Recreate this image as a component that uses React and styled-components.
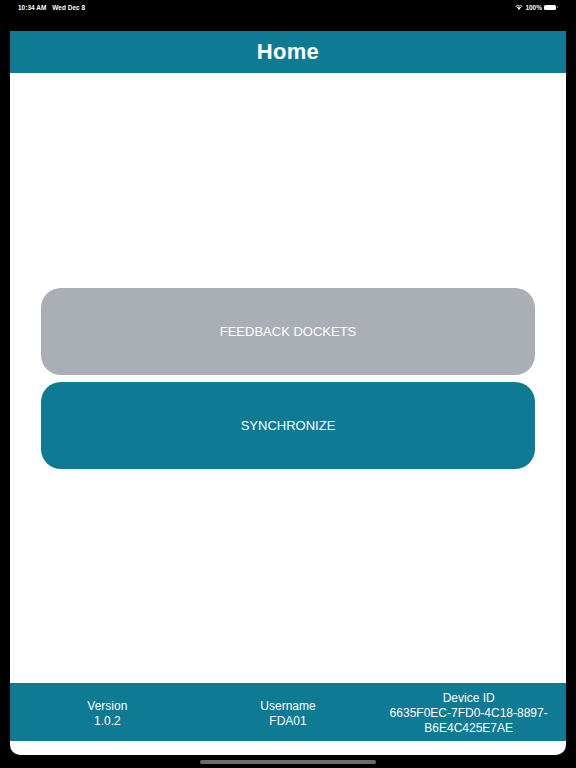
import styled, { createGlobalStyle } from "styled-components";

const GlobalStyle = createGlobalStyle`
  html, body {
    margin: 0;
    padding: 0;
    background: #000;
  }
  body {
    font-family: "Liberation Sans", Arial, Helvetica, sans-serif;
  }
`;

const TEAL = "#0e7a94";

const Screen = styled.div`
  width: 576px;
  height: 768px;
  display: flex;
  flex-direction: column;
  background: #000;
  overflow: hidden;
`;

const StatusBar = styled.div`
  height: 31px;
  flex-shrink: 0;
  display: flex;
  justify-content: space-between;
  align-items: flex-start;
  padding: 3px 18px 0 18px;
  box-sizing: border-box;
  color: #fff;
  font-size: 6.5px;
  font-weight: 700;
`;

const StatusGroup = styled.div`
  display: flex;
  align-items: center;
  gap: ${(p) => p.gap || 6}px;
  height: 8px;
`;

const Battery = styled.div`
  display: flex;
  align-items: center;
  gap: 1px;
`;

const BatteryBody = styled.div`
  width: 12px;
  height: 5px;
  border-radius: 1.5px;
  background: #fff;
`;

const BatteryNub = styled.div`
  width: 1px;
  height: 2px;
  border-radius: 0 1px 1px 0;
  background: #8a8a8a;
`;

const Sheet = styled.div`
  margin: 0 10px;
  height: 724px;
  flex-shrink: 0;
  background: #fff;
  border-radius: 0 0 10px 10px;
  display: flex;
  flex-direction: column;
  overflow: hidden;
`;

const Header = styled.header`
  height: 42px;
  flex-shrink: 0;
  background: ${TEAL};
  display: flex;
  align-items: center;
  justify-content: center;
`;

const Title = styled.h1`
  margin: 0;
  color: #fff;
  font-size: 22px;
  font-weight: 700;
  letter-spacing: 0.3px;
`;

const Content = styled.main`
  flex: 1;
  display: flex;
  flex-direction: column;
  justify-content: center;
  gap: 7px;
  padding: 0 31px;
`;

const ActionButton = styled.button`
  height: 87px;
  border: none;
  border-radius: 20px;
  background: ${(p) => (p.variant === "primary" ? TEAL : "#aaaeb5")};
  color: #fff;
  font-family: inherit;
  font-size: 13px;
  cursor: pointer;
`;

const Footer = styled.footer`
  height: 58px;
  flex-shrink: 0;
  box-sizing: border-box;
  background: ${TEAL};
  display: grid;
  grid-template-columns: 1fr 1fr 1fr;
  align-items: center;
  padding: 3px 7px 0 7px;
`;

const InfoItem = styled.div`
  color: #fff;
  font-size: 12px;
  line-height: 15px;
  text-align: center;
  padding: 0 4px;
`;

const BottomStrip = styled.div`
  height: 14px;
  flex-shrink: 0;
`;

const HomeBar = styled.div`
  display: flex;
  justify-content: center;
  padding-top: 5px;
`;

const HomeIndicator = styled.div`
  width: 176px;
  height: 4px;
  border-radius: 2px;
  background: #6b6b6b;
`;

function Wifi() {
  return (
    <svg width="8" height="6" viewBox="0 0 16 12">
      <path d="M8 12 L5.2 9.1 A4 4 0 0 1 10.8 9.1 Z" fill="#fff" />
      <path d="M3.4 7.3 A6.6 6.6 0 0 1 12.6 7.3 L11.3 8.6 A4.8 4.8 0 0 0 4.7 8.6 Z" fill="#fff" />
      <path d="M0.8 4.7 A10.3 10.3 0 0 1 15.2 4.7 L13.9 6 A8.5 8.5 0 0 0 2.1 6 Z" fill="#fff" />
    </svg>
  );
}

const info = [
  { label: "Version", value: "1.0.2" },
  { label: "Username", value: "FDA01" },
  { label: "Device ID", value: "6635F0EC-7FD0-4C18-8897-B6E4C425E7AE" },
];

export default function App() {
  return (
    <Screen>
      <GlobalStyle />
      <StatusBar>
        <StatusGroup gap={6}>
          <span>10:34 AM</span>
          <span>Wed Dec 8</span>
        </StatusGroup>
        <StatusGroup gap={2}>
          <Wifi />
          <span>100%</span>
          <Battery>
            <BatteryBody />
            <BatteryNub />
          </Battery>
        </StatusGroup>
      </StatusBar>
      <Sheet>
        <Header>
          <Title>Home</Title>
        </Header>
        <Content>
          <ActionButton>FEEDBACK DOCKETS</ActionButton>
          <ActionButton variant="primary">SYNCHRONIZE</ActionButton>
        </Content>
        <Footer>
          {info.map((item) => (
            <InfoItem key={item.label}>
              <div>{item.label}</div>
              <div>{item.value}</div>
            </InfoItem>
          ))}
        </Footer>
        <BottomStrip />
      </Sheet>
      <HomeBar>
        <HomeIndicator />
      </HomeBar>
    </Screen>
  );
}
